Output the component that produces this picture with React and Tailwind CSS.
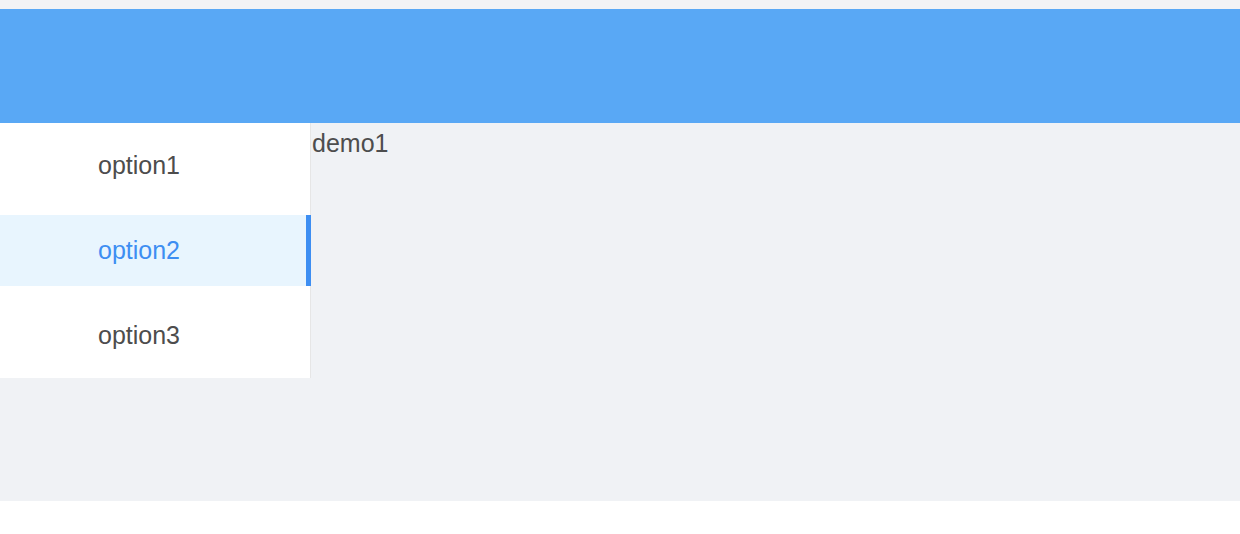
export default function App() {
  const items = ["option1", "option2", "option3"];
  const active = 1;
  return (
    <div className="w-[1240px] h-[534px] bg-white flex flex-col" style={{ fontFamily: '"Liberation Sans", Arial, sans-serif' }}>
      <div className="h-[9px] bg-[#f2f3f5]" />
      <div className="h-[114px] bg-[#59a8f5]" />
      <div className="h-[378px] bg-[#f0f2f5] flex items-start">
        <div className="w-[311px] bg-white border-r border-[#e6e6e6] py-[7px] flex flex-col gap-[14px]">
          {items.map((t, i) => (
            <div
              key={t}
              className={
                i === active
                  ? "h-[71px] flex items-center pl-[98px] text-[25px] text-[#3d8ef2] bg-[#e8f5fe] border-r-[5px] border-[#3d8ef2] -mr-px"
                  : "h-[71px] flex items-center pl-[98px] text-[25px] text-[#4d4d4d]"
              }
            >
              {t}
            </div>
          ))}
        </div>
        <div className="text-[25px] text-[#4d4d4d] leading-none pt-[8px] pl-px">demo1</div>
      </div>
    </div>
  );
}
